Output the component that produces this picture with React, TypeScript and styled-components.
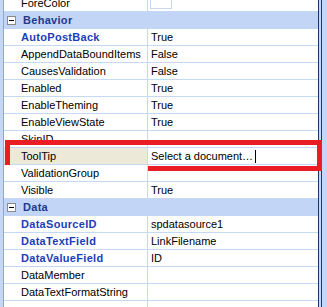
import styled, { createGlobalStyle } from 'styled-components'

//////////////////////////////////////////////////////////////////////

const GlobalStyle = createGlobalStyle`
    html, body {
        margin: 0;
        padding: 0;
        width: 327px;
        height: 307px;
        overflow: hidden;
        background: #c4d8f6;
    }
    body {
        font-family: 'Liberation Sans', Arial, sans-serif;
        font-size: 11px;
        color: #000;
    }
`

const Page = styled.div`
    width: 327px;
    height: 307px;

    display: flex;
    align-items: stretch;

    overflow: hidden;
`

const Grid = styled.div`
    width: 314px;

    margin-left: 3px;
    margin-top: -5px;

    display: flex;
    flex-direction: column;

    background: #fff;
    border-left: 1px solid #8ea8d0;
    border-right: 1px solid #1b356d;
`

const Edge = styled.div`
    flex: 1;

    margin-left: 2px;

    border-left: 1px solid #1b356d;
    background: #c4d8f6;
`

const Category = styled.div`
    height: 16px;
    flex-shrink: 0;

    display: flex;
    align-items: center;

    background: #c2d5f6;
    border-bottom: 1px solid #c2d5f6;

    color: #1d3b8f;
    font-weight: bold;
    letter-spacing: 0.3px;
`

const Toggle = styled.svg`
    width: 9px;
    height: 9px;

    margin: 0 7px 0 3px;
    flex-shrink: 0;
`

const Row = styled.div`
    height: 16px;
    flex-shrink: 0;

    display: grid;
    grid-template-columns: 144px 1fr;

    position: relative;

    border-bottom: 1px solid #c6d9f4;
`

const Name = styled.div<{ $bold?: boolean; $selected?: boolean }>`
    padding-left: 17px;

    display: flex;
    align-items: center;

    background: ${({ $selected }) => $selected ? '#ece9d8' : '#fff'};
    border-right: 1px solid #c6d9f4;

    color: ${({ $bold }) => $bold ? '#1a40b8' : '#000'};
    font-weight: ${({ $bold }) => $bold ? 'bold' : 'normal'};
    letter-spacing: ${({ $bold }) => $bold ? '0.3px' : '0'};
    white-space: nowrap;
    overflow: hidden;
`

const Value = styled.div`
    padding-left: 3px;

    display: flex;
    align-items: center;

    white-space: nowrap;
    overflow: hidden;
`

const Swatch = styled.span`
    width: 20px;
    height: 13px;

    margin-left: -1px;
    align-self: flex-start;

    border: 1px solid #c9d6e8;
    border-top: none;
`

const Caret = styled.span`
    width: 0;
    height: 13px;

    margin-left: 2px;

    border-left: 1px solid #000;
`

const Highlight = styled.div`
    width: 307px;
    height: 21px;

    position: absolute;
    top: -8px;
    left: 1px;

    border: 5px solid #ea1c24;

    pointer-events: none;
`

//////////////////////////////////////////////////////////////////////

type Prop = { name: string; value?: string; bold?: boolean }

const behavior: Prop[] = [
    { name: 'AutoPostBack', value: 'True', bold: true },
    { name: 'AppendDataBoundItems', value: 'False' },
    { name: 'CausesValidation', value: 'False' },
    { name: 'Enabled', value: 'True' },
    { name: 'EnableTheming', value: 'True' },
    { name: 'EnableViewState', value: 'True' },
    { name: 'SkinID' },
]

const behaviorTail: Prop[] = [
    { name: 'ValidationGroup' },
    { name: 'Visible', value: 'True' },
]

const data: Prop[] = [
    { name: 'DataSourceID', value: 'spdatasource1', bold: true },
    { name: 'DataTextField', value: 'LinkFilename', bold: true },
    { name: 'DataValueField', value: 'ID', bold: true },
    { name: 'DataMember' },
    { name: 'DataTextFormatString' },
    { name: '' },
]

function Minus() {
    return (
        <Toggle viewBox="0 0 9 9" shapeRendering="crispEdges">
            <rect x="0.5" y="0.5" width="8" height="8" fill="#fff" stroke="#8a8a8a" />
            <rect x="2" y="4" width="5" height="1" fill="#000" />
        </Toggle>
    )
}

function PropRow({ name, value, bold }: Prop) {
    return (
        <Row>
            <Name $bold={bold}>{name}</Name>
            <Value>{value}</Value>
        </Row>
    )
}

export default function App() {
    return (
        <Page>
            <GlobalStyle />
            <Grid>
                <Row>
                    <Name>ForeColor</Name>
                    <Value><Swatch /></Value>
                </Row>

                <Category><Minus />Behavior</Category>
                {behavior.map(item => <PropRow key={item.name} {...item} />)}

                <Row>
                    <Name $selected>ToolTip</Name>
                    <Value>Select a document…<Caret /></Value>
                    <Highlight />
                </Row>

                {behaviorTail.map(item => <PropRow key={item.name} {...item} />)}

                <Category><Minus />Data</Category>
                {data.map((item, i) => <PropRow key={item.name + i} {...item} />)}
            </Grid>
            <Edge />
        </Page>
    )
}
